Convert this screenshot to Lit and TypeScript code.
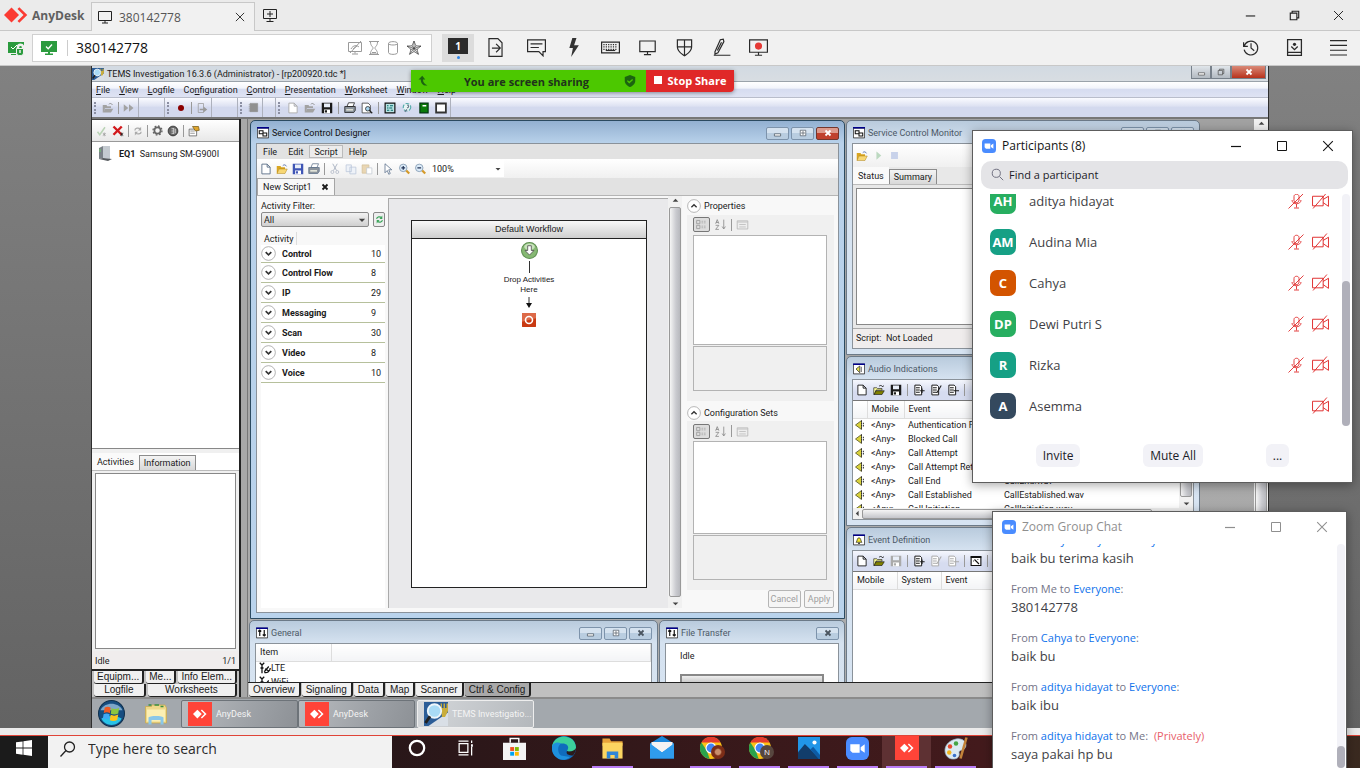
import { LitElement, html, svg, css, nothing } from 'lit';
import { customElement, property } from 'lit/decorators.js';
import { classMap } from 'lit/directives/class-map.js';

const shapes: Record<string, any> = {
  close: svg`<path d="M2.5 2.5l11 11M13.5 2.5l-11 11" fill="none" stroke="currentColor" stroke-width="1.2"/>`,
  closeBold: svg`<path d="M3 3l10 10M13 3L3 13" fill="none" stroke="currentColor" stroke-width="3.600"/>`,
  minimize: svg`<path d="M3 8.5h10" stroke="currentColor" stroke-width="1.2"/>`,
  minimizeBar: svg`<path d="M2.500 8.500h11v4h-11z" fill="#fff" stroke="currentColor" stroke-width="1.300"/>`,
  maximize: svg`<path d="M3.5 3.5h9v9h-9z" fill="none" stroke="currentColor"/>`,
  maximizeBox: svg`<path d="M2.500 2.500h11v11h-11z" fill="#fff" stroke="currentColor" stroke-width="1.400"/><path d="M6 6h4v4H6z" fill="none" stroke="currentColor" stroke-width="1.400"/>`,
  restore: svg`<path d="M3.5 5.5h7v7h-7zM5.5 5.5v-2h7v7h-2" fill="none" stroke="currentColor" stroke-width="1.2"/>`,
  anydesk: svg`<path d="M5 3l5 5-5 5-5-5z" fill="currentColor"/><path d="M9 4l1.200-1.200L15.500 8l-5.300 5.200L9 12l4-4z" fill="currentColor"/>`,
  monitor: svg`<path d="M1.500 2.500h13v9h-13zM8 11.500v2.500M5 14h6" fill="none" stroke="currentColor"/>`,
  plusTab: svg`<path d="M1.500 2.500h13v9h-13zM8 12v2.500M4.500 14.500h7M8 4v6M5 7h6" fill="none" stroke="currentColor"/>`,
  secure: svg`<path d="M0 2h16v7h-4l-3 4H0z" fill="#2b9b3e"/><path d="M3 7l2 2 4-4" stroke="#fff" fill="none"/><path d="M10 9V7c0-3 5-3 5 0v2" fill="none" stroke="#f1f1f1" stroke-width="2.500"/><path d="M8.500 8.500h7V13c0 3.500-7 3.500-7 0z" fill="#2b9b3e" stroke="#f1f1f1"/><path d="M12 10v3" stroke="#f1f1f1" stroke-width="1.500"/><path d="M3 14.500h5" stroke="#2b9b3e"/>`,
  online: svg`<path d="M0 1h16v11H0zM7 12h2v2H7zM4 13.500h8v1.500H4z" fill="#2b9b3e"/><path d="M5 6.500l2.200 2.200L11 4.500" fill="none" stroke="#fff" stroke-width="1.300"/>`,
  noScreen: svg`<path d="M1.500 2.500h13v9h-13zM8 11.500v2M5 14h6M4 9c2-4 6-4 8-2M3 13L14 1M6 9l4-3" fill="none" stroke="currentColor"/>`,
  hourglass: svg`<path d="M3 1.500h10M3 14.500h10M4.500 2c0 4 2.500 4.500 2.500 6s-2.500 2-2.500 6h7c0-4-2.500-4.500-2.500-6s2.500-2 2.500-6M6 12.500h4" fill="none" stroke="currentColor"/>`,
  cylinder: svg`<path d="M3.500 3.500v9c0 2.500 9 2.500 9 0v-9c0-2.500-9-2.500-9 0zm0 0c0 2 9 2 9 0" fill="none" stroke="currentColor"/>`,
  star: svg`<path d="M8 1l1.900 4.800 5.100.3-4 3.200 1.400 5L8 11.500l-4.400 2.800 1.400-5-4-3.200 5.100-.3zM8 1v10.500M1 6.100l10.500 3.500M15 6.100L4.500 9.600M3.600 14.300L9.900 5.800M12.400 14.300L6.100 5.800" fill="none" stroke="currentColor" stroke-width=".7"/>`,
  fileSend: svg`<path d="M2.500.5h7.500l3.500 3.500v11.500h-11zM5 8.500h6.500M8.500 5l3.500 3.500-3.500 3.500" fill="none" stroke="currentColor"/>`,
  chat: svg`<path d="M.500 1.500h15v10h-2v3.500l-3.500-3.500h-9.500zM3 5h10M3 8h7" fill="none" stroke="currentColor"/>`,
  bolt: svg`<path d="M7 0h3.500L8.500 6h4L6 16l1.500-7.500H4.500z" fill="#333"/>`,
  keyboard: svg`<path d="M.500 3.500h15v9h-15z" fill="none" stroke="currentColor"/><path d="M2 5.500h12M2 7.500h12M2 9.500h12" stroke="currentColor" stroke-dasharray="1 1"/><path d="M4 10.500h8" stroke="currentColor"/>`,
  shield: svg`<path d="M2 1.500h12v6c0 4-4 6-6 7.500C6 13.500 2 11.500 2 7.500zM8 1.500v13.500M2 7.500h12" fill="none" stroke="currentColor"/>`,
  pen: svg`<path d="M2.500 11.500L7 1.500l2.500-.5.500 2-5 9.500-2.500 1zM4.500 10.500L8 3.500M1.500 14.500h14" fill="none" stroke="currentColor"/>`,
  record: svg`<path d="M.500 1.500h15v10.500h-15zM8 12v2.500M5 14.500h6" fill="none" stroke="currentColor"/><circle cx="8" cy="6.800" r="3" fill="#e53935"/>`,
  history: svg`<path d="M1.500 3v4h4M2 7a6.500 6.500 0 1 1 0 3M8.500 4v4.500l3 2.500" fill="none" stroke="currentColor" stroke-width="1.100"/>`,
  addressBook: svg`<path d="M1.500.5h13v15h-13zM1.500 12.500h13M5 7l3 3 3-3" fill="none" stroke="currentColor" stroke-width="1.200"/><circle cx="8" cy="5" r="1.500" fill="currentColor"/>`,
  menu: svg`<path d="M0 1.500h16M0 6h16M0 10.500h16M0 15h16" stroke="currentColor"/>`,
  magnifierApp: svg`<rect width="16" height="16" fill="#2c5d97"/><path d="M16 7v9H3z" fill="#d9dfe6"/><path d="M11 1h1v3h1V1h1v3h1V1h1v5l-2 4h-2z" fill="#c9ad3b"/><circle cx="7" cy="6" r="4.500" fill="#a9dbf6" stroke="#eef6fb" stroke-width="1.200"/><path d="M4 9.500L1 14" stroke="#222" stroke-width="2"/>`,
  folder: svg`<path d="M1 4h5l1 1.500h5V8H4l-2 6H1z" fill="#d9a520"/><path d="M4 8h11l-3 6H1.500z" fill="#f7d774" stroke="#a77b10" stroke-width=".6"/><path d="M9 3.500c2-2 4-1 5 1" fill="none" stroke="#3b5aa0"/>`,
  folderGray: svg`<path d="M1 4h5l1 1.500h5V8H4l-2 6H1zM4 9h11l-3 5H2z" fill="#a2a2a2"/><path d="M9 3c2-2 4-1 5 1" fill="none" stroke="#888"/>`,
  folderOlive: svg`<path d="M1 5h4l1 1h6v2H4l-2 6H1z" fill="#ffff9a" stroke="#111" stroke-width=".8"/><path d="M4 9h11l-3 5H1.500z" fill="#808000" stroke="#111" stroke-width=".8"/><path d="M8 3c2-2 4-1 5 1l1-2" fill="none" stroke="#111"/>`,
  forward: svg`<path d="M1 3l6 5-6 5zM8 3l6 5-6 5z" fill="#a2a2a2"/>`,
  dot: svg`<circle cx="8" cy="8" r="4" fill="#8b0000"/>`,
  exportGray: svg`<path d="M3 2h7v12H3z" fill="none" stroke="#999"/><path d="M5 9h5V6l5 4-5 4v-3H5z" fill="#999"/>`,
  book: svg`<path d="M3 2h11v12H3zM1 4h2M1 7h2M1 10h2M1 13h2" fill="#909090" stroke="#909090"/>`,
  page: svg`<path d="M2.500 1.500h7l4 4v9h-11zM9.500 1.500v4h4" fill="#fff" stroke="currentColor" stroke-width="1.200"/>`,
  floppy: svg`<path d="M1 1h14v14H1z" fill="currentColor"/><path d="M4 2h8v5H4z" fill="#e8eef8"/><path d="M4 10h8v5H4z" fill="#fff"/><path d="M5 11h3v3H5z" fill="currentColor"/>`,
  printer: svg`<path d="M4 6l2-5h8l-2 5z" fill="#fff" stroke="currentColor"/><path d="M1 6h14v5l-2 3H1z" fill="#8c949c" stroke="currentColor"/><path d="M3 10.500h9" stroke="#ffe" stroke-width="1.500"/>`,
  preview: svg`<path d="M1.500 1.500h8l3 3v10h-11z" fill="#fff" stroke="#333"/><circle cx="9" cy="9" r="3" fill="#a8d4ee" stroke="#222"/><path d="M11 11l4 4" stroke="#222" stroke-width="1.600"/>`,
  scriptBoard: svg`<path d="M1.500 1.500h13v13h-13z" fill="#b9e4e4" stroke="#111" stroke-width="1.600"/><path d="M4 5h2M8 5h4M4 8h2M7 8h4M4 11h3M9 11h3" stroke="#066" stroke-width="1.300"/>`,
  globeLoop: svg`<circle cx="8" cy="7" r="5" fill="#e7f4f4" stroke="#5aa" stroke-width="1.500" stroke-dasharray="5 2"/><path d="M5 13l3-3M8 4c3 0 3 3 0 4" fill="none" stroke="#678" stroke-width="1.500"/>`,
  greenBook: svg`<path d="M2.500 1.500h11v13h-11z" fill="#0a7a0a" stroke="#031" stroke-width="1.500"/><path d="M6 5h5" stroke="#fff" stroke-width="2"/>`,
  frame: svg`<path d="M1.500 2h13v12h-13z" fill="#fff" stroke="#333" stroke-width="2.400"/>`,
  tickGray: svg`<path d="M2 9l3 4 7-10" fill="none" stroke="#b9d3b5" stroke-width="2"/><path d="M11 10v5M9 11l4 3M13 11l-4 3" stroke="#999"/>`,
  crossRed: svg`<path d="M2 2l11 11M13 2L2 13" stroke="#d2191c" stroke-width="3.200"/><path d="M13 10v5M11 11l4 3M15 11l-4 3" stroke="#222"/>`,
  sync: svg`<path d="M3 7c0-4 6-5 9-2M13 9c0 4-6 5-9 2" fill="none" stroke="currentColor" stroke-width="2"/><path d="M13 1v6H8zM3 15V9h5z" fill="currentColor"/>`,
  gear: svg`<circle cx="8" cy="8" r="4.500" fill="none" stroke="#666" stroke-width="2.500"/><circle cx="8" cy="8" r="6.500" fill="none" stroke="#666" stroke-width="2" stroke-dasharray="2.500 2.600"/>`,
  badge: svg`<circle cx="8" cy="8" r="6.500" fill="#666" stroke="#222"/><path d="M9 4v8M6 5h3M6 8h3M6 11h3M11 5v6" stroke="#eee"/>`,
  properties: svg`<path d="M1.500 5.500h10v9h-10z" fill="#fff" stroke="#555"/><path d="M3 8h6M3 11h6" stroke="#777"/><path d="M6 2h8l1 5-5 1z" fill="#dfa52c" stroke="#755b1b"/>`,
  device: svg`<path d="M2 3l4-2v12l-4 1z" fill="#7b8288"/><path d="M6 1h7v13l-7-1z" fill="#c4cad0"/><path d="M2 14l4-1 9 1-4 2z" fill="#55595d"/><path d="M3 4v3" stroke="#6fd06f"/>`,
  scissors: svg`<path d="M5 1l5 9M11 1L6 10" stroke="#aeb6c4" stroke-width="1.300"/><circle cx="4.500" cy="12" r="2" fill="none" stroke="#aeb6c4"/><circle cx="11" cy="12" r="2" fill="none" stroke="#aeb6c4"/>`,
  copy: svg`<path d="M1.500 2.500h7v9h-7zM6.500 5.500h8v9h-8z" fill="#eef2f8" stroke="#b9c5da"/>`,
  paste: svg`<path d="M1.500 2.500h9v11h-9z" fill="#e9d6b3" stroke="#d3c09b"/><path d="M7.500 6.500h7v8h-7z" fill="#fff" stroke="#c3c9d3"/>`,
  cursor: svg`<path d="M4 1v12l3-3 2 5 2-1-2-5h4z" fill="#fff" stroke="#536987"/>`,
  zoomIn: svg`<circle cx="7" cy="6.500" r="5" fill="#dcebf8" stroke="#7790aa"/><path d="M4.500 6.500h5M7 4v5" stroke="#235" stroke-width="1.600"/><path d="M11 10l4 4" stroke="#d49a2a" stroke-width="3"/>`,
  zoomOut: svg`<circle cx="7" cy="6.500" r="5" fill="#dcebf8" stroke="#7790aa"/><path d="M4.500 6.500h5" stroke="#235" stroke-width="1.600"/><path d="M11 10l4 4" stroke="#d49a2a" stroke-width="3"/>`,
  play: svg`<path d="M5 2l7 6-7 6z" fill="#bcd9c0"/>`,
  stop: svg`<path d="M3 3h10v10H3z" fill="#c8d2ea"/>`,
  serviceWin: svg`<path d="M.500 1.500h15v13H.500z" fill="#fff" stroke="#111"/><path d="M0 1h16" stroke="#00008b" stroke-width="2"/><path d="M3 5h5v4H3zM8 8h5v4H8z" fill="#fff" stroke="#111" stroke-width="1.400"/>`,
  audioWin: svg`<path d="M.500 1.500h15v13H.500z" fill="#fff" stroke="#111"/><path d="M0 1.500h16" stroke="#00008b" stroke-width="2"/><path d="M4 8l5-4v9z" fill="#e6e04a" stroke="#333"/><path d="M11 5v7" stroke="#333"/>`,
  eventWin: svg`<path d="M.500 1.500h15v13H.500z" fill="#fff" stroke="#111"/><path d="M0 1.500h16" stroke="#00008b" stroke-width="2"/><path d="M4 11c2-1 1-6 4-6s2 5 4 6z" fill="#f2e62e" stroke="#332"/><path d="M7 12.500h2" stroke="#111" stroke-width="1.500"/>`,
  chartWin: svg`<path d="M.500 1.500h15v13H.500z" fill="#fff" stroke="#111"/><path d="M0 1.500h16" stroke="#00008b" stroke-width="2"/><path d="M5 4v8M3 6l2-2 2 2M11 12V4M9 10l2 2 2-2" fill="none" stroke="#111" stroke-width="1.600"/>`,
  speaker: svg`<path d="M2 8l8-6v12z" fill="#d9d23c" stroke="#4b4a20"/><path d="M10 2v12M12.500 5v6" stroke="#333" stroke-width="1.400" stroke-dasharray="2 1"/>`,
  listAdd: svg`<path d="M2.500 1.500h7l2 2v11h-9z" fill="#fff" stroke="currentColor" stroke-width="1.300"/><path d="M4 5h5M4 8h5M4 11h5M12 6v6M9.500 9h6" stroke="currentColor" stroke-width="1.400"/>`,
  listEdit: svg`<path d="M2.500 1.500h7l2 2v11h-9z" fill="#fff" stroke="currentColor" stroke-width="1.300"/><path d="M4 5h5M4 8h5M4 11h5M15 2l-6 10" stroke="currentColor" stroke-width="1.400"/>`,
  listRemove: svg`<path d="M2.500 1.500h7l2 2v11h-9z" fill="#fff" stroke="currentColor" stroke-width="1.300"/><path d="M4 5h5M4 8h5M4 11h5M9 9h7" stroke="currentColor" stroke-width="1.400"/>`,
  wandBoard: svg`<path d="M1.500 2h13v12h-13z" fill="#fff" stroke="#111" stroke-width="1.500"/><path d="M1 3h14" stroke="#111" stroke-width="2"/><path d="M6 6l6 6M4 8h1M10 6h1" stroke="#111" stroke-width="1.500"/>`,
  category: svg`<path d="M2 3h4v4H2zM2 9h4v4H2z" fill="none" stroke="#999"/><path d="M8 4h6M8 6h6M8 10h6M8 12h6" stroke="#aaa" stroke-dasharray="2 1"/>`,
  sortAz: svg`<path d="M2 7l2-5 2 5M2.500 5.500h3M2 9h4l-4 5h4M12 2v11M10 10.500l2 3 2-3" fill="none" stroke="#888"/>`,
  sheet: svg`<path d="M1.500 3.500h13v10h-13z" fill="#eee" stroke="#b5b5b5"/><path d="M2 5h12M4 8h8M4 11h8" stroke="#bbb"/>`,
  chevronDown: svg`<circle cx="8" cy="8" r="7.300" fill="#fff" stroke="#999" stroke-width=".8"/><path d="M5 6.500L8 9.500l3-3" fill="none" stroke="#333" stroke-width="1.700"/>`,
  chevronUp: svg`<circle cx="8" cy="8" r="7.300" fill="#fff" stroke="#999" stroke-width=".8"/><path d="M5 9.500L8 6.500l3 3" fill="none" stroke="#333" stroke-width="1.500"/>`,
  startNode: svg`<circle cx="8" cy="8" r="7.500" fill="#86b873" stroke="#5f8f52"/><ellipse cx="8" cy="4.500" rx="5" ry="3" fill="#c7e2ba"/><path d="M6.300 3.500h3.400V8h2.500L8 12.300 3.800 8h2.500z" fill="#fff" stroke="#555" stroke-width=".8"/>`,
  stopNode: svg`<rect width="16" height="16" rx="1" fill="#c93a12"/><path d="M0 0h16v6L0 10z" fill="#dd6a48"/><circle cx="8" cy="8" r="4" fill="none" stroke="#fff" stroke-width="1.800"/>`,
  antenna: svg`<path d="M1 1l3 3 3-3M4 4v11M2 8h4M7 13l6-7M7 14c4 1 8-2 8-6M8 9l5 3" fill="none" stroke="#111" stroke-width="1.700"/>`,
  arrowUp: svg`<path d="M3 10l5-5 5 5z" fill="#444"/>`,
  arrowDown: svg`<path d="M3 6l5 5 5-5z" fill="#444"/>`,
  arrowLeft: svg`<path d="M10 3L5 8l5 5z" fill="#444"/>`,
  arrowRight: svg`<path d="M6 3l5 5-5 5z" fill="#444"/>`,
  sharePointer: svg`<path d="M2 6l5-5 4 5H8c0 4 2 6 6 8-6 1-9-3-9-8z" fill="#1c6410"/>`,
  shieldTick: svg`<path d="M8 0l7 2.500V8c0 4-4 7-7 8-3-1-7-4-7-8V2.500z" fill="#1c6410"/><path d="M4.500 7.500l2.500 2.500 4.500-4" fill="none" stroke="#4cc800" stroke-width="1.800"/>`,
  zoomLogo: svg`<rect width="16" height="16" rx="4" fill="#4a8cff"/><path d="M3 5h6.500v6H4.500L3 9.500zM10.200 7.200L13 5v6l-2.800-2z" fill="#fff"/>`,
  search: svg`<circle cx="6.500" cy="6.500" r="5" fill="none" stroke="currentColor" stroke-width="1.200"/><path d="M10.500 10.500l4.500 4.500" stroke="currentColor" stroke-width="1.200"/>`,
  searchWin: svg`<circle cx="9.500" cy="6" r="5" fill="none" stroke="currentColor" stroke-width="1.300"/><path d="M6 9.500L.500 15.500" stroke="currentColor" stroke-width="1.300"/>`,
  micOff: svg`<path d="M6 8V3.500c0-3 5-3 5 0V7c0 3-4 3.500-5 1M4 7c0 5 9 5 9 0M8.500 11v3.500M6 15h5M15.500.500L.500 15.500" fill="none" stroke="currentColor" stroke-width=".9"/>`,
  camOff: svg`<path d="M.500 4h10v9h-10zM10.500 7l5-3v9.500l-5-3.500M14 .500L1 15.500" fill="none" stroke="currentColor" stroke-width=".9"/>`,
  win10: svg`<path d="M0 2.300L6.600 1.400v6.200H0zM7.400 1.300L16 0v7.600H7.400zM0 8.400h6.600v6.300L0 13.800zM7.400 8.400H16V16l-8.600-1.200z" fill="#fff"/>`,
  orb: svg`<circle cx="8" cy="8" r="7.700" fill="#164d80" stroke="#0f304d" stroke-width=".6"/><path d="M2 11c2 5 10 5 12 0-3-2-9-2-12 0z" fill="#28c3e8"/><path d="M1.500 6C4 1 12 1 14.500 6z" fill="#7da7c9"/><path d="M4 4.500c1.500-.8 2.500-.5 3.500.1L7 7.800c-1-.6-2-.8-3.600-.1z" fill="#ee5a24"/><path d="M8 4.900c1.500.7 3 .6 4.500-.2L12 8c-1.300.6-3 .8-4.400.1z" fill="#8cc63f"/><path d="M3.300 8.400c1.500-.7 2.600-.4 3.600.1l-.5 3.200c-1-.6-2-.8-3.600-.1z" fill="#3fa9f5"/><path d="M7.500 8.800c1.500.7 3 .6 4.500-.2l-.6 3.300c-1.300.6-3 .8-4.400.1z" fill="#fcc419"/>`,
  explorer7: svg`<path d="M1 3h4V2h9l1 2v10H1z" fill="#efd98a" stroke="#c8a84c" stroke-width=".5"/><path d="M3 2h2M7 2h3M11 3h2" stroke="#3a8f42"/><path d="M2 5h12v8H2z" fill="#fbefb4"/><path d="M3 15v-4.500c0-1.500 10-1.500 10 0V15h-2v-3H5v3z" fill="#8ac7e8"/>`,
  cortana: svg`<circle cx="8" cy="8" r="4.800" fill="none" stroke="#fff" stroke-width="1.500"/>`,
  taskView: svg`<path d="M2.500 4.500h7v7h-7zM2 2.500h8M2 13.500h8M12.500 2v2M12.500 7v7" fill="none" stroke="#fff"/><path d="M12 5h1.500v2H12z" fill="#fff"/>`,
  store: svg`<path d="M5 4V1h6v3" fill="none" stroke="#fff"/><path d="M0 4h16v12H0z" fill="#f4f4f4"/><path d="M5 7h2.700v2.700H5z" fill="#f25022"/><path d="M8.300 7H11v2.700H8.300z" fill="#7fba00"/><path d="M5 10.300h2.700V13H5z" fill="#00a4ef"/><path d="M8.300 10.300H11V13H8.300z" fill="#ffb900"/>`,
  edge: svg`<circle cx="8" cy="8" r="8" fill="#0f6cbd"/><path d="M0 7C1 1 7-1 11 1c4 1 5 5 5 7s-3 3-6 2c2-3 0-5-3-5S1 6 0 7z" fill="#3ccf9b"/><path d="M0 7c1-3 4-3 6-2-3 2-2 7 0 8l6 1c-6 5-13-1-12-7z" fill="#1e90dd"/><path d="M10 10c2 1 5 0 6-2 0 2-1 4-2 5-3 0-5-1-4-3z" fill="#2b1a1a"/>`,
  explorer10: svg`<path d="M1 1h5l1 2h8v3H1z" fill="#e8a33a"/><path d="M1 4h14v11H1z" fill="#fcd561"/><path d="M4 15v-5h8v5h-2.500v-2.500h-3V15z" fill="#2f86d6"/>`,
  mail: svg`<path d="M0 5l8-5 8 5v10H0z" fill="#1a86d9"/><path d="M1 4h14v2L8 11 1 6z" fill="#f3f3f3"/><path d="M0 5l8 6 8-6v10H0z" fill="#2f9cec"/>`,
  chrome: svg`<circle cx="8" cy="8" r="8" fill="#fbc116"/><path d="M1 4a8 8 0 0 1 14 0H8z" fill="#e33b2e"/><path d="M1 4l4 6 2 6A8 8 0 0 1 1 4z" fill="#2ba24c"/><circle cx="8" cy="8" r="4" fill="#fff"/><circle cx="8" cy="8" r="3.200" fill="#4285f4"/>`,
  photos: svg`<path d="M0 0h16v16H0z" fill="#2196e8"/><path d="M0 11l5-6 11 11H0z" fill="#123d6b"/><path d="M9 9l2-2 5 6v3h-1z" fill="#0d5ba5"/><circle cx="12" cy="4" r="1.500" fill="#fff"/>`,
  paint: svg`<path d="M8 2c5-1 8 3 6 6-1 2-4 1-4 3 1 4-3 5-6 4C-1 13-1 4 8 2z" fill="#dce9f2" stroke="#9cb5c8" stroke-width=".5"/><circle cx="4" cy="7" r="1.500" fill="#e6492d"/><circle cx="8" cy="5" r="1.500" fill="#45a445"/><circle cx="3.500" cy="11" r="1.500" fill="#f2b51d"/><circle cx="7" cy="13" r="1.200" fill="#3a70c9"/><path d="M15 1l-4 14" stroke="#c3833a" stroke-width="1.700"/>`,
};

const icon = (name: string, size = 12) => html`
  <svg width=${size} height=${size} viewBox="0 0 16 16" aria-hidden="true">${shapes[name]}</svg>
`;

const base = css`
  * { box-sizing: border-box; }
  svg { display: block; flex: none; }
  button, input, select {
    font: inherit;
    color: inherit;
    margin: 0;
    padding: 0;
    border: none;
    background: none;
  }
  button {
    display: flex;
    align-items: center;
    justify-content: center;
    white-space: nowrap;
  }
`;

@customElement('mdi-window')
export class MdiWindow extends LitElement {
  static styles = [base, css`
    :host {
      display: flex;
      flex-direction: column;
      box-sizing: border-box;
      border: 1px solid #6c7a88;
      border-radius: 5px 5px 0 0;
      background: linear-gradient(#b9cbdd, #d5e2f0 22px, #d7e4f2);
      color: #4c5866;
      overflow: hidden;
    }
    :host([active]) {
      border-color: #2b4a60;
      background: linear-gradient(#93b0d1, #b8d1ea 22px, #b9d3ec);
      color: #111;
    }
    header {
      display: flex;
      flex: none;
      align-items: center;
      gap: 3px;
      height: 22px;
      padding: 2px 5px 0 6px;
    }
    h2 { margin: 0; font-size: 9px; font-weight: 400; flex: 1; white-space: nowrap; }
    .buttons { display: flex; gap: 2px; }
    .buttons button {
      width: 23px;
      height: 13px;
      border: 1px solid #7d93ab;
      border-radius: 2px;
      background: linear-gradient(#d5e2ef 50%, #b9cde0 50%);
      color: #4a5560;
    }
    .buttons .danger { background: linear-gradient(#dd9a8c 45%, #c0412d 50%); color: #fff; border-color: #74372d; }
    .body {
      display: flex;
      flex-direction: column;
      flex: 1;
      min-height: 0;
      margin: 0 5px 5px;
      border: 1px solid #8a929a;
      background: #fff;
      color: #1a1a1a;
    }
  `];

  @property() heading = '';
  @property() glyph = 'serviceWin';
  @property({ type: Boolean, reflect: true }) active = false;
  @property({ type: Boolean }) closeOnly = false;

  render() {
    return html`
      <header>
        ${icon(this.glyph)}
        <h2>${this.heading}</h2>
        <div class="buttons">
          ${this.closeOnly ? nothing : html`
            <button aria-label="Minimize">${icon('minimizeBar', 9)}</button>
            <button aria-label="Maximize">${icon('maximizeBox', 8)}</button>
          `}
          <button class=${classMap({ danger: this.active })} aria-label="Close">${icon('closeBold', 8)}</button>
        </div>
      </header>
      <div class="body"><slot></slot></div>
    `;
  }
}

@customElement('zoom-window')
export class ZoomWindow extends LitElement {
  static styles = [base, css`
    :host {
      display: flex;
      flex-direction: column;
      box-sizing: border-box;
      border: 1px solid #5d5d5d;
      background: #fff;
      color: #131313;
      box-shadow: 0 2px 10px rgba(0, 0, 0, 0.35);
      font-family: "Open Sans", "Noto Sans", sans-serif;
    }
    :host([inactive]) { color: #8f8f8f; }
    header { display: flex; flex: none; align-items: center; height: 29px; padding: 0 1px 0 9px; }
    h2 { flex: 1; margin: 0 0 0 6px; font-size: 12px; font-weight: 400; }
    header button { width: 46px; height: 29px; }
  `];

  @property() heading = '';

  render() {
    return html`
      <header>
        ${icon('zoomLogo', 14)}
        <h2>${this.heading}</h2>
        <button aria-label="Minimize">${icon('minimize', 16)}</button>
        <button aria-label="Maximize">${icon('maximize', 16)}</button>
        <button aria-label="Close">${icon('close', 14)}</button>
      </header>
      <slot></slot>
    `;
  }
}

const menus = [['F', 'ile'], ['V', 'iew'], ['L', 'ogfile'], ['C', 'onfiguration', 1], ['C', 'ontrol'],
  ['P', 'resentation'], ['W', 'orksheet'], ['W', 'indow'], ['H', 'elp']];

const activities = [['Control', 10], ['Control Flow', 8], ['IP', 29], ['Messaging', 9], ['Scan', 30], ['Video', 8], ['Voice', 10]];

const audioEvents = [
  ['Authentication Failure', 'AuthenticationFailure.wav'],
  ['Blocked Call', 'BlockedCall.wav'],
  ['Call Attempt', 'CallAttempt.wav'],
  ['Call Attempt Retry', 'CallAttemptRetry.wav'],
  ['Call End', 'CallEnd.wav'],
  ['Call Established', 'CallEstablished.wav'],
  ['Call Initiation', 'CallInitiation.wav'],
];

const people = [
  { name: 'aditya hidayat', initials: 'AH', tone: 'green', muted: true },
  { name: 'Audina Mia', initials: 'AM', tone: 'teal', muted: true },
  { name: 'Cahya', initials: 'C', tone: 'orange', muted: true },
  { name: 'Dewi Putri S', initials: 'DP', tone: 'green', muted: true },
  { name: 'Rizka', initials: 'R', tone: 'teal', muted: true },
  { name: 'Asemma', initials: 'A', tone: 'navy', muted: false },
];

const messages = [
  { from: 'aditya hidayat', to: 'Everyone', text: 'baik bu terima kasih' },
  { from: 'Me', to: 'Everyone', text: '380142778' },
  { from: 'Cahya', to: 'Everyone', text: 'baik bu' },
  { from: 'aditya hidayat', to: 'Everyone', text: 'baik ibu' },
  { from: 'aditya hidayat', to: 'Me', text: 'saya pakai hp bu', secret: true },
];

const taskbarApps = [
  { glyph: 'cortana', label: 'Cortana', size: 24 },
  { glyph: 'taskView', label: 'Task View', size: 20 },
  { glyph: 'store', label: 'Microsoft Store', size: 23 },
  { glyph: 'edge', label: 'Microsoft Edge', size: 24 },
  { glyph: 'explorer10', label: 'File Explorer', size: 23, open: true },
  { glyph: 'mail', label: 'Mail', size: 24 },
  { glyph: 'chrome', label: 'Chrome', size: 22, open: true, badge: 'face' },
  { glyph: 'chrome', label: 'Chrome profile', size: 22, open: true, badge: 'N' },
  { glyph: 'photos', label: 'Photos', size: 22, open: true },
  { glyph: 'zoomLogo', label: 'Zoom', size: 23, open: true },
  { glyph: 'anydesk', label: 'AnyDesk', size: 14, open: true, current: true },
  { glyph: 'paint', label: 'Paint', size: 24, open: true },
];

@customElement('app-root')
export class AppRoot extends LitElement {
  static styles = [base, css`
    :host {
      display: flex;
      flex-direction: column;
      position: relative;
      height: 100vh;
      overflow: hidden;
      font-family: "Open Sans", "Noto Sans", sans-serif;
      color: #222;
    }
    h2, h3, p, ul { margin: 0; padding: 0; font-weight: 400; }
    ul { list-style: none; }
    .grow { flex: 1; }

    .tabbar { display: flex; flex: none; height: 31px; background: #ebebeb; border-bottom: 1px solid #c8c8c8; }
    .brand { display: flex; align-items: center; gap: 4px; width: 91px; padding-left: 4px; font-size: 12px; font-weight: 700; color: #606060; }
    .brand svg { color: #fb3b33; }
    .tab {
      display: flex;
      align-items: center;
      gap: 6px;
      width: 164px;
      height: 29px;
      margin-top: 2px;
      padding: 0 8px 0 5px;
      border: 1px solid #c8c8c8;
      border-bottom: none;
      background: #f1f1f1;
      font-size: 12px;
      color: #555;
    }
    .tab svg { color: #222; }
    .new-tab { width: 30px; }
    .tool { width: 44px; flex: none; }
    .toolbar { display: flex; flex: none; align-items: center; height: 35px; padding-bottom: 1px; background: #f1f1f1; border-bottom: 1px solid #c8c8c8; color: #2a2a2a; }
    .toolbar .tool { height: 28px; }
    .secure { width: 32px; }
    .address { display: flex; align-items: center; width: 400px; height: 28px; padding: 0 9px 0 8px; border: 1px solid #d0d0d0; background: #fff; gap: 3px; color: #9a9a9a; }
    .address input { flex: 1; min-width: 0; margin-left: 7px; padding-left: 8px; border-left: 1px solid #ccc; font-size: 14px; line-height: 16px; color: #111; }
    .address .fav { color: #444; margin-left: 2px; }
    .screen { flex-direction: column; gap: 2px; width: 32px; height: 28px; margin-left: 10px; background: #dcdcdc; }
    .screen b { width: 20px; background: #2b2b2b; color: #fff; font-size: 10px; line-height: 16px; margin-top: 2px; }
    .screen i { width: 3px; height: 3px; border-radius: 50%; background: #2e86e8; }
    .tools { display: flex; }
    .tools .tool { width: 37px; }
    .tools .tool:first-child { width: 42px; margin-right: 2px; }

    /* remote desktop */
    .stage { display: flex; flex: 1; min-height: 0; padding: 0 91px; background: linear-gradient(#818181, #636363); }
    .remote {
      display: flex;
      flex-direction: column;
      flex: 1;
      min-width: 0;
      border: solid #2e2e2e;
      border-width: 0 1px;
      background: #a8a8a8;
      font: 9px/12px Roboto, "Open Sans", sans-serif;
      color: #1a1a1a;
    }
    .titlebar { display: flex; flex: none; align-items: center; gap: 3px; height: 16px; background: linear-gradient(#d2dae2, #d8dde2); border-bottom: 1px solid #9aa2aa; }
    .caption { display: flex; align-self: flex-start; margin-right: 2px; }
    .caption button { width: 20px; height: 13px; border: 1px solid #77808a; border-top: none; background: linear-gradient(#e0e5ea, #b3bac2); color: #555; }
    .caption .danger { width: 35px; background: linear-gradient(#d98a78, #b8321c); color: #fff; }
    .menubar { display: flex; flex: none; align-items: center; gap: 9px; height: 16px; padding-left: 4px; background: linear-gradient(#fff, #f2f4fb 40%, #d6dcf0 50%, #dfe3f3); border-bottom: 1px solid #b9bdcb; }
    .bars { display: flex; flex: none; height: 21px; background: linear-gradient(#fafbff, #dfe3f3 40%, #d3d9ee 50%, #d3d9ee); border-bottom: 2px solid #777; }
    .bar { display: flex; align-items: center; gap: 4px; padding: 0 3px 0 2px; border-right: 1px solid #adb1bd; }
    .bar::before { content: ""; width: 2px; height: 12px; border-left: 2px dotted #8b8fa3; }
    .bar.w26 { width: 26px; }
    .bar.w13 { width: 13px; }
    .bar.wide { gap: 5px; }
    .bar.empty::before { display: none; }
    .sep { flex: none; width: 1px; height: 12px; background: #999; }
    .workspace { display: flex; flex: 1; min-height: 0; }

    .dock { display: flex; flex-direction: column; flex: none; width: 149px; background: #f0f0f0; border-right: 2px solid #222; }
    .dock-tools { display: flex; align-items: center; gap: 4px; height: 23px; padding-left: 4px; border-top: 1px solid #444; border-bottom: 1px solid #999; background: linear-gradient(#fff, #e8e8e8); }
    .equipment { display: flex; flex: 306; gap: 6px; align-items: flex-start; padding: 3px 5px; background: #fff; border-bottom: 1px solid #888; }
    .equipment p { padding-top: 3px; line-height: 12px; white-space: nowrap; }
    .equipment b { margin-right: 2px; }
    .subtabs { display: flex; align-items: flex-end; height: 18px; border-bottom: 1px solid #bbb; }
    .subtabs button { height: 15px; padding: 0 4px; border: 1px solid #8c8c8c; border-bottom: none; background: linear-gradient(#f4f4f4, #d8d8d8); }
    .subtabs .on { height: 17px; border-color: transparent; background: #fafafa; }
    .dock .subtabs { margin-top: 4px; background: #fff; }
    .info { flex: 178; margin: 2px 3px; background: #fff; border: 1px solid #888; }
    .status { display: flex; justify-content: space-between; padding: 4px 3px 2px; background: #f0eded; border-bottom: 2px solid #222; }
    .sheets { display: flex; flex: none; height: 14px; background: #c0c0c0; font: 10px/12px "Liberation Sans", Arial, sans-serif; }
    .sheets button { padding: 0 4px; background: #f0f0f0; border: solid #222; border-width: 0 2px 1px 0; border-radius: 0 0 3px 3px; margin-left: 1px; }
    .sheets .on { background: #a9a9a9; }
    .dock .sheets { height: 13px; padding-right: 2px; }
    .dock .sheets button { flex: 1 1 auto; margin-left: 2px; padding: 0 3px; }
    .dock .sheets button:last-child { flex-grow: 2; }

    .mdi { display: flex; flex-direction: column; flex: 1; min-width: 0; margin-left: 6px; border-left: 1px solid #777; }
    .canvas-row { display: flex; flex: 1; min-height: 0; }
    .desk { position: relative; flex: 1; overflow: hidden; background: linear-gradient(#a2a2a2, #adadad); border-bottom: 1px solid #222; }
    .vbar { display: flex; flex-direction: column; align-items: center; justify-content: space-between; flex: none; width: 14px; background: #f1f1f1; }
    .vbar i { flex: 1; width: 12px; margin: 2px 0; border: 1px solid #999; border-radius: 2px; background: linear-gradient(90deg, #f5f5f5, #c9cacf 60%, #b8b9be); }
    mdi-window { position: absolute; }
    .w-designer { left: 2px; top: 1px; width: 595px; height: 499px; }
    .w-monitor { left: 598px; top: 1px; width: 354px; height: 235px; }
    .w-audio { left: 598px; top: 237px; width: 354px; height: 170px; }
    .w-event { left: 598px; top: 408px; width: 354px; height: 190px; }
    .w-general { left: 1px; top: 501px; width: 409px; height: 120px; }
    .w-transfer { left: 411px; top: 501px; width: 186px; height: 120px; }

    .designer { display: flex; flex-direction: column; flex: 1; min-height: 0; background: #e2e2e2; }
    .designer-menu { display: flex; align-items: center; height: 15px; padding-left: 1px; }
    .designer-menu button { height: 13px; padding: 0 4px; margin-right: 1px; border: 1px solid transparent; }
    .designer-menu .on { border-color: #bbb; background: #ececec; }
    .iconbar { display: flex; flex: none; align-items: center; gap: 4px; height: 19px; padding-left: 3px; background: linear-gradient(#fff, #f0f0f0); }
    .blue { color: #3f55b5; }
    .slate { color: #5b6f88; }
    .drop { display: grid; align-items: center; }
    .drop select, .drop svg { grid-area: 1 / 1; }
    .drop select { appearance: none; }
    .drop svg { justify-self: end; margin-right: 2px; pointer-events: none; }
    .zoom-level select { width: 74px; height: 17px; padding-left: 2px; background: #fff; }
    .pagetabs { display: flex; height: 18px; align-items: flex-end; border-bottom: 1px solid #b5b5b5; }
    .pagetabs button { gap: 9px; height: 17px; padding: 0 5px; border: 1px solid #a5a5a5; border-bottom: none; background: #f8f8f8; }
    .panes { display: flex; flex: 1; min-height: 0; background: #f8f8f8; padding-bottom: 4px; }
    .palette { display: flex; flex-direction: column; width: 131px; padding: 4px 0 0 4px; }
    .filter { display: flex; gap: 4px; margin-bottom: 5px; }
    .filter select { width: 108px; height: 15px; padding-left: 2px; border: 1px solid #8a8a8a; border-radius: 2px; background: linear-gradient(#f2f2f2, #d0d0d0); }
    .filter button { width: 12px; height: 15px; border: 1px solid #888; border-radius: 2px; color: #3ba55a; background: #eee; }
    .palette h3 { font-size: 9px; line-height: 12px; padding: 1px 3px 0; width: 36px; border-right: 1px solid #ddd; }
    .activities { flex: 1; background: #fff; width: 124px; }
    .activities li { display: flex; align-items: center; gap: 6px; height: 20px; padding-right: 4px; border-bottom: 1px solid #b6c09c; }
    .activities li:first-child { height: 18px; }
    .activities b { flex: 1; }
    .activities span { width: 10px; }
    .flow { flex: 1; display: flex; margin-top: 2px; padding: 21px 21px 20px 22px; background: #e9e9eb; border: solid #aaa; border-width: 1px 0 0 1px; }
    .flowbox { flex: 1; display: flex; flex-direction: column; align-items: center; border: 1px solid #222; background: #fff; font: 8px/10px "Liberation Sans", Arial, sans-serif; text-align: center; }
    .flowbox h3 { align-self: stretch; font-size: 9px; line-height: 17px; border-bottom: 1px solid #222; background: linear-gradient(#f8f8f8, #cfcfcf); }
    .entry { margin-top: 3px; }
    .line { width: 1px; height: 12px; margin: 2px 0; background: #333; }
    .exit { margin-top: 4px; }
    .props { display: flex; flex-direction: column; width: 156px; padding: 2px 4px 0 5px; }
    .props h3 { display: flex; align-items: center; gap: 3px; font-size: 9px; line-height: 12px; height: 18px; }
    .props section { padding: 0 7px 10px 6px; margin-bottom: 4px; background: #f0f0f0; }
    .propbar { display: flex; align-items: center; gap: 4px; height: 20px; }
    .propbar .on { border: 1px solid #777; border-radius: 2px; background: #ddd; padding: 0 1px; }
    .box { height: 110px; border: 1px solid #b3b3b3; background: #fff; }
    .box.short { height: 93px; }
    .hint { height: 45px; margin-top: 1px; border: 1px solid #b3b3b3; }
    .actions { display: flex; justify-content: flex-end; gap: 3px; margin-top: -4px; }
    .actions button { height: 18px; padding: 0 2px; min-width: 30px; border: 1px solid #b5b5b5; border-radius: 2px; background: #f5f5f5; color: #a0a0a0; }

    .monitor { display: flex; flex-direction: column; flex: 1; background: #e8e8e8; }
    .monitor .iconbar { height: 23px; gap: 5px; }
    .monitor .box { flex: 1; margin: 3px; border-color: #888; }
    .monitor p { padding: 3px 3px 4px; background: #f0eded; border-top: 1px solid #aaa; }
    .lavender { height: 21px; background: linear-gradient(#f5f7fd, #d6dcf0 60%); gap: 5px; border-bottom: 1px solid #777; }
    .faded { color: #aaa; }
    table { border-collapse: collapse; table-layout: fixed; width: 100%; line-height: 12px; }
    th { font-weight: 400; text-align: left; height: 17px; padding: 0 4px; border-right: 1px solid #ddd; border-bottom: 1px solid #ddd; background: linear-gradient(#fff, #f3f4f6); }
    td { height: 14px; padding: 0 4px; white-space: nowrap; overflow: hidden; }
    td:first-child:has(svg) { padding: 0 1px; }
    .c-icon { width: 14px; }
    .c-mobile { width: 37px; }
    .c-event { width: 96px; }
    .c-narrow { width: 44px; }
    .c-item { width: 75px; }
    .scroller { display: flex; flex: 1; min-height: 0; }
    .rows { flex: 1; overflow: hidden; min-width: 0; }
    .hbar { display: flex; flex: none; align-items: center; height: 11px; background: #f1f1f1; }
    .hbar i { width: 290px; height: 10px; border: 1px solid #999; border-radius: 2px; background: linear-gradient(#f5f5f5, #c4c5ca); }
    .tech { display: flex; align-items: center; padding-left: 2px; }
    .transfer { padding: 6px 14px; }
    .transfer div { height: 16px; margin-top: 12px; border: 2px solid #888; background: linear-gradient(#eee, #aaa); }

    .taskbar7 { display: flex; flex: none; align-items: center; height: 31px; padding-left: 6px; background: #a3a8ad; border-top: 2px solid #8b8b8b; }
    .taskbar7 .plain { margin-right: 19px; }
    .taskbar7 .task { justify-content: flex-start; gap: 4px; width: 117px; height: 28px; padding-left: 6px; border: 1px solid #6d7379; border-radius: 2px; background: linear-gradient(110deg, #b9bcc0, #9da1a6 60%, #8d9196); color: #f4f4f4; }
    .taskbar7 .plain + .task { margin-left: -6px; }
    .taskbar7 .task.on { margin-left: 2px; background: linear-gradient(110deg, #d5d8db, #b4b8bc); border-color: #eee; }
    .taskbar7 span { display: flex; align-items: center; justify-content: center; width: 24px; height: 24px; background: #ff4438; color: #fff; }

    .share { position: absolute; left: 411px; top: 70px; display: flex; height: 22px; font-size: 11px; font-weight: 700; box-shadow: 0 1px 4px rgba(0, 0, 0, 0.4); border-radius: 0 0 4px 4px; }
    .share p { display: flex; align-items: center; justify-content: space-between; width: 235px; padding: 0 10px 0 6px; background: #4cc800; color: #20331c; font-weight: 700; }
    .share button { gap: 6px; width: 88px; background: #e02828; color: #fff; border-radius: 0 0 4px 0; padding-bottom: 2px; }
    .share i { width: 8px; height: 8px; background: #fff; }

    /* local taskbar */
    .gutter { flex: none; height: 7px; background: #ebebeb; }
    .taskbar { display: flex; flex: none; height: 33px; border-top: 1px solid #e04438; background: linear-gradient(90deg, #1a1517, #2c1719 35%, #431a1c 72%, #3a2a20); }
    .start { width: 48px; padding-bottom: 8px; background: #1b1b1b; }
    .find { display: flex; align-items: center; gap: 12px; width: 344px; padding: 0 12px 7px; background: #f2f2f2; font-size: 14px; }
    .find input { flex: 1; min-width: 0; }
    .find input::placeholder { color: #2b2b2b; opacity: 1; }
    .app { position: relative; width: 49px; padding-bottom: 8px; }
    .app.open::after { content: ""; position: absolute; left: 4px; right: 4px; bottom: 0; height: 2px; background: #b97cf5; }
    .app.current { background: #5e3133; }
    .app.current span { display: flex; align-items: center; justify-content: center; width: 24px; height: 24px; background: #ff4438; color: #fff; }
    .badge { position: absolute; left: 25px; top: 9px; width: 14px; height: 14px; border-radius: 50%; background: #57463f; color: #fff; font-size: 8px; font-style: normal; line-height: 14px; }
    .badge.face { background: radial-gradient(circle, #c98d6b 25%, #7c2d17 40%); }

    .people { position: absolute; right: 7px; top: 130px; width: 381px; height: 353px; }
    .searchbox { display: flex; align-items: center; gap: 5px; height: 28px; margin: 1px 4px 5px 8px; padding: 0 10px 1px; border-radius: 10px; background: #e4e4e7; color: #6e6e7e; font-size: 11px; }
    .searchbox input { flex: 1; }
    .searchbox input::placeholder { color: #1c1c28; opacity: 1; }
    .listing { display: flex; flex: none; height: 232px; padding: 0 2px 0 17px; font-size: 13px; color: #3f3f46; }
    .listing ul { flex: 1; display: flex; flex-direction: column; justify-content: flex-end; overflow: hidden; }
    .listing li { display: flex; flex: none; align-items: center; height: 41px; gap: 8px; padding-right: 13px; color: #e02b2b; }
    .listing li span { flex: 1; color: #3f3f46; margin-left: 5px; }
    .avatar { width: 26px; height: 26px; border-radius: 7px; color: #fff; text-align: center; line-height: 26px; }
    .green { background: #27ae60; }
    .teal { background: #16a085; }
    .orange { background: #d35400; }
    .navy { background: #34495e; }
    .track { width: 8px; border-radius: 4px; background: #f2f2f7; display: flex; flex-direction: column; justify-content: flex-end; }
    .track i { height: 145px; border-radius: 4px; background: #b0b0ba; }
    .people footer { display: flex; flex: 1; align-items: center; justify-content: space-evenly; padding-top: 3px; font-size: 12px; color: #1c1c28; }
    .people footer button { height: 23px; padding: 0 7px; border-radius: 6px; background: #f2f2f7; }

    .chat { position: absolute; right: 13px; bottom: 0; width: 355px; height: 257px; border-bottom: none; }
    .thread { display: flex; flex: 1; min-height: 0; margin-top: 3px; padding: 0 1px 0 18px; }
    .messages { flex: 1; display: flex; flex-direction: column; justify-content: flex-end; gap: 11px; padding-bottom: 4px; overflow: hidden; font-size: 13px; line-height: 19px; color: #3f3f46; }
    .messages h3 { font-size: 11px; line-height: 19px; color: #747487; }
    .messages a { color: #0e71eb; text-decoration: none; }
    .messages em { margin-left: 3px; font-style: normal; color: #e8606a; }
    .thread .track i { height: 22px; }
  `];

  renderTabs() {
    return html`
      <header class="tabbar">
        <div class="brand">${icon('anydesk', 24)}AnyDesk</div>
        <div class="tab">${icon('monitor', 16)}<span class="grow">380142778</span>
          <button aria-label="Close tab">${icon('close', 12)}</button></div>
        <button class="new-tab" aria-label="New tab">${icon('plusTab', 16)}</button>
        <div class="grow"></div>
        <button class="tool" aria-label="Minimize">${icon('minimize', 15)}</button>
        <button class="tool" aria-label="Restore">${icon('restore', 15)}</button>
        <button class="tool" aria-label="Close">${icon('close', 13)}</button>
      </header>
      <nav class="toolbar">
        <button class="secure" aria-label="Connection">${icon('secure', 16)}</button>
        <label class="address">
          ${icon('online', 16)}
          <input type="text" aria-label="Remote address" .value=${'380142778'}>
          ${icon('noScreen', 16)}${icon('hourglass', 16)}${icon('cylinder', 16)}
          <span class="fav">${icon('star', 16)}</span>
        </label>
        <button class="screen"><b>1</b><i></i></button>
        <div class="tools">
          ${['fileSend', 'chat', 'bolt', 'keyboard', 'monitor', 'shield', 'pen', 'record'].map((name) => html`
            <button class="tool" aria-label=${name}>${icon(name, 19)}</button>
          `)}
        </div>
        <div class="grow"></div>
        ${['history', 'addressBook', 'menu'].map((name) => html`
          <button class="tool" aria-label=${name}>${icon(name, 17)}</button>
        `)}
      </nav>
    `;
  }

  renderDock() {
    return html`
      <aside class="dock">
        <div class="dock-tools">
          ${icon('tickGray')}${icon('crossRed')}<span class="sep"></span>
          <span class="faded">${icon('sync', 10)}</span><span class="sep"></span>
          ${icon('gear', 11)}${icon('badge')}<span class="sep"></span>${icon('properties')}
        </div>
        <div class="equipment">${icon('device', 16)}<p><b>EQ1</b> Samsung SM-G900I</p></div>
        <div class="subtabs"><button class="on">Activities</button><button>Information</button></div>
        <div class="info"></div>
        <div class="status"><span>Idle</span><span>1/1</span></div>
        <div class="sheets"><button>Equipm...</button><button>Me...</button><button>Info Elem...</button></div>
        <div class="sheets"><button>Logfile</button><button>Worksheets</button></div>
      </aside>
    `;
  }

  renderProps(title: string, short: boolean) {
    return html`
      <h3>${icon('chevronUp', 14)}${title}</h3>
      <section>
        <div class="propbar">
          <span class="on">${icon('category', 13)}</span>${icon('sortAz', 13)}
          <span class="sep"></span>${icon('sheet', 13)}
        </div>
        <div class=${classMap({ box: true, short })}></div>
        <div class="hint"></div>
      </section>
    `;
  }

  renderDesigner() {
    return html`
      <mdi-window class="w-designer" heading="Service Control Designer" active>
        <div class="designer">
          <div class="designer-menu">
            <button>File</button><button>Edit</button><button class="on">Script</button><button>Help</button>
          </div>
          <div class="iconbar">
            <span class="slate">${icon('page')}</span>${icon('folder')}<span class="blue">${icon('floppy')}</span>
            <span class="slate">${icon('printer')}</span><span class="sep"></span>
            ${icon('scissors')}${icon('copy')}${icon('paste')}<span class="sep"></span>
            ${icon('cursor')}${icon('zoomIn')}${icon('zoomOut')}
            <div class="drop zoom-level">
              <select aria-label="Zoom"><option>100%</option></select>${icon('arrowDown', 8)}
            </div>
          </div>
          <div class="pagetabs"><button>New Script1 ${icon('closeBold', 8)}</button></div>
          <div class="panes">
            <div class="palette">
              <label for="filter">Activity Filter:</label>
              <div class="filter">
                <div class="drop"><select id="filter"><option>All</option></select>${icon('arrowDown', 10)}</div>
                <button aria-label="Refresh">${icon('sync', 9)}</button>
              </div>
              <h3>Activity</h3>
              <ul class="activities">
                ${activities.map(([name, count]) => html`
                  <li>${icon('chevronDown', 15)}<b>${name}</b><span>${count}</span></li>
                `)}
              </ul>
            </div>
            <div class="flow">
              <div class="flowbox">
                <h3>Default Workflow</h3>
                <div class="entry">${icon('startNode', 17)}</div>
                <div class="line"></div>
                <p>Drop Activities<br>Here</p>
                <svg width="8" height="14" viewBox="0 0 8 14">
                  <path d="M4 2v8" stroke="#333"/><path d="M1 8h6l-3 5z" fill="#111"/>
                </svg>
                <div class="exit">${icon('stopNode', 14)}</div>
              </div>
            </div>
            <div class="vbar">${icon('arrowUp', 9)}<i></i>${icon('arrowDown', 9)}</div>
            <div class="props">
              ${this.renderProps('Properties', false)}
              ${this.renderProps('Configuration Sets', true)}
              <div class="actions"><button disabled>Cancel</button><button disabled>Apply</button></div>
            </div>
          </div>
        </div>
      </mdi-window>
    `;
  }

  renderSideWindows() {
    return html`
      <mdi-window class="w-monitor" heading="Service Control Monitor">
        <div class="monitor">
          <div class="iconbar">${icon('folder')}${icon('play', 11)}${icon('stop', 11)}</div>
          <div class="subtabs"><button class="on">Status</button><button>Summary</button></div>
          <div class="box"></div>
          <p>Script: &nbsp;Not Loaded</p>
        </div>
      </mdi-window>
      <mdi-window class="w-audio" heading="Audio Indications" glyph="audioWin">
        <div class="iconbar lavender">
          ${icon('page')}${icon('folderOlive')}${icon('floppy')}<span class="sep"></span>
          ${icon('listAdd')}${icon('listEdit')}${icon('listRemove')}<span class="sep"></span>
          ${icon('arrowLeft')}
        </div>
        <div class="scroller">
          <div class="rows">
            <table>
              <thead><tr><th class="c-icon"></th><th class="c-mobile">Mobile</th><th class="c-event">Event</th><th></th></tr></thead>
              <tbody>
                ${audioEvents.map(([name, file]) => html`
                  <tr><td>${icon('speaker')}</td><td>&lt;Any&gt;</td><td>${name}</td><td>${file}</td></tr>
                `)}
              </tbody>
            </table>
          </div>
          <div class="vbar">${icon('arrowUp', 9)}<i></i>${icon('arrowDown', 9)}</div>
        </div>
        <div class="hbar">${icon('arrowLeft', 9)}<i></i><span class="grow"></span>${icon('arrowRight', 9)}</div>
      </mdi-window>
      <mdi-window class="w-event" heading="Event Definition" glyph="eventWin">
        <div class="iconbar lavender">
          ${icon('page')}${icon('folderOlive')}<span class="faded">${icon('floppy')}</span><span class="sep"></span>
          ${icon('listAdd')}<span class="faded">${icon('listEdit')}</span><span class="faded">${icon('listRemove')}</span>
          <span class="sep"></span>${icon('wandBoard')}<span class="sep"></span>
        </div>
        <table>
          <thead><tr><th class="c-narrow">Mobile</th><th class="c-narrow">System</th><th>Event</th></tr></thead>
        </table>
      </mdi-window>
      <mdi-window class="w-general" heading="General" glyph="chartWin">
        <table>
          <thead><tr><th class="c-item">Item</th><th></th></tr></thead>
          <tbody>
            <tr><td><span class="tech">${icon('antenna')}LTE</span></td><td></td></tr>
            <tr><td><span class="tech">${icon('antenna')}WiFi</span></td><td></td></tr>
          </tbody>
        </table>
      </mdi-window>
      <mdi-window class="w-transfer" heading="File Transfer" glyph="chartWin" closeOnly>
        <div class="transfer">Idle<div></div></div>
      </mdi-window>
    `;
  }

  renderRemote() {
    return html`
      <main class="stage">
        <div class="remote">
          <div class="titlebar">
            ${icon('magnifierApp')}<span class="grow">TEMS Investigation 16.3.6 (Administrator) - [rp200920.tdc *]</span>
            <div class="caption">
              <button aria-label="Minimize">${icon('minimizeBar', 9)}</button>
              <button aria-label="Restore">${icon('restore', 10)}</button>
              <button class="danger" aria-label="Close">${icon('closeBold', 8)}</button>
            </div>
          </div>
          <nav class="menubar">
            ${menus.map(([key, rest, inner]) => inner
              ? html`<span>Co<u>n</u>figuration</span>`
              : html`<span><u>${key}</u>${rest}</span>`)}
          </nav>
          <div class="bars">
            <div class="bar">${icon('folderGray')}<span class="sep"></span>${icon('forward')}</div>
            <div class="bar empty w26"></div>
            <div class="bar">${icon('dot')}<span class="sep"></span>${icon('exportGray')}</div>
            <div class="bar empty w26"></div>
            <div class="bar">${icon('book', 11)}</div>
            <div class="bar empty w13"></div>
            <div class="bar wide">
              <span class="faded">${icon('page')}</span>${icon('folderGray')}${icon('floppy')}<span class="sep"></span>
              ${icon('printer')}${icon('preview')}<span class="sep"></span>
              ${icon('scriptBoard')}${icon('globeLoop')}${icon('greenBook')}${icon('frame')}
            </div>
          </div>
          <div class="workspace">
            ${this.renderDock()}
            <div class="mdi">
              <div class="canvas-row">
                <div class="desk">${this.renderSideWindows()}${this.renderDesigner()}</div>
                <div class="vbar">${icon('arrowUp', 9)}<i></i>${icon('arrowDown', 9)}</div>
              </div>
              <div class="sheets">
                ${['Overview', 'Signaling', 'Data', 'Map', 'Scanner', 'Ctrl & Config'].map((name) => html`
                  <button class=${classMap({ on: name === 'Ctrl & Config' })}>${name}</button>
                `)}
              </div>
            </div>
          </div>
          <div class="taskbar7">
            <button class="plain" aria-label="Start">${icon('orb', 27)}</button>
            <button class="plain" aria-label="Explorer">${icon('explorer7', 24)}</button>
            <button class="task"><span>${icon('anydesk', 14)}</span>AnyDesk</button>
            <button class="task"><span>${icon('anydesk', 14)}</span>AnyDesk</button>
            <button class="task on">${icon('magnifierApp', 24)}TEMS Investigatio...</button>
          </div>
        </div>
      </main>
      <div class="share">
        <p>${icon('sharePointer', 12)}You are screen sharing${icon('shieldTick', 12)}</p>
        <button><i></i>Stop Share</button>
      </div>
    `;
  }

  renderTaskbar() {
    return html`
      <div class="gutter"></div>
      <footer class="taskbar">
        <button class="start" aria-label="Start">${icon('win10', 16)}</button>
        <label class="find">${icon('searchWin', 16)}
          <input type="text" aria-label="Search" placeholder="Type here to search">
        </label>
        ${taskbarApps.map((app) => html`
          <button class=${classMap({ app: true, open: !!app.open, current: !!app.current })} aria-label=${app.label}>
            <span>${icon(app.glyph, app.size)}</span>
            ${app.badge ? html`<i class=${classMap({ badge: true, face: app.badge === 'face' })}>${app.badge === 'N' ? 'N' : ''}</i>` : nothing}
          </button>
        `)}
      </footer>
    `;
  }

  renderZoom() {
    return html`
      <zoom-window class="people" heading="Participants (8)">
        <label class="searchbox">${icon('search', 13)}
          <input type="text" aria-label="Find a participant" placeholder="Find a participant">
        </label>
        <div class="listing">
          <ul>
            ${people.map((person) => html`
              <li>
                <b class="avatar ${person.tone}">${person.initials}</b><span>${person.name}</span>
                ${person.muted ? icon('micOff', 16) : nothing}${icon('camOff', 17)}
              </li>
            `)}
          </ul>
          <div class="track"><i></i></div>
        </div>
        <footer><button>Invite</button><button>Mute All</button><button>...</button></footer>
      </zoom-window>
      <zoom-window class="chat" heading="Zoom Group Chat" inactive>
        <div class="thread">
          <div class="messages">
            ${messages.map(({ from, to, text, secret }) => html`
              <article>
                <h3>From ${from === 'Me' ? from : html`<a href="#">${from}</a>`} to
                  ${to === 'Me' ? to : html`<a href="#">${to}</a>`}:
                  ${secret ? html`<em>(Privately)</em>` : nothing}</h3>
                <p>${text}</p>
              </article>
            `)}
          </div>
          <div class="track"><i></i></div>
        </div>
      </zoom-window>
    `;
  }

  render() {
    return html`
      ${this.renderTabs()}
      ${this.renderRemote()}
      ${this.renderTaskbar()}
      ${this.renderZoom()}
    `;
  }
}
